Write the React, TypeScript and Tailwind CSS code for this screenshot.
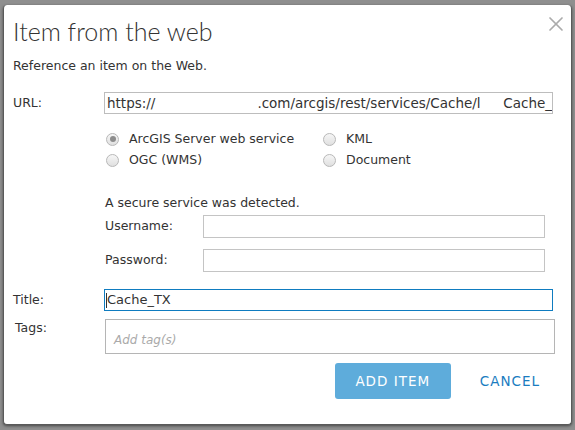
import { X } from 'lucide-react';

function Radio({ checked, label }: { checked?: boolean; label: string }) {
  return (
    <div className="flex items-center gap-[10px]">
      <span className="w-[13px] h-[13px] rounded-full border border-[#b8b8b8] bg-gradient-to-b from-[#f6f6f6] to-[#e0e0e0] flex items-center justify-center">
        {checked && <span className="w-[6px] h-[6px] rounded-full bg-[#8c8c8c]" />}
      </span>
      <span>{label}</span>
    </div>
  );
}

export default function App() {
  return (
    <div className="w-[575px] h-[430px] bg-[#8f8f8f] pt-[5px] pl-[3px] pr-[3px] pb-[5px]" style={{ fontFamily: '"DejaVu Sans", Verdana, sans-serif' }}>
      <div className="h-full bg-white rounded-[4px] border-l border-b border-r border-[#5a5a5a] shadow-[0_1px_3px_rgba(0,0,0,0.5)] text-[12.5px] text-[#333]">
        <div className="flex items-start justify-between pl-[9px] pr-[3px] pt-[11px]">
          <h1 className="text-[25px] font-light text-[#333] leading-[30px]" style={{ fontFamily: 'Lato, "Open Sans", sans-serif' }}>Item from the web</h1>
          <X className="w-[24px] h-[24px] text-[#ababab] -mt-[4px]" strokeWidth={1.7} />
        </div>
        <p className="pl-[9px] mt-[12px] leading-[16px]">Reference an item on the Web.</p>

        <div className="flex items-center mt-[18px] pl-[9px] pr-[18px]">
          <span className="w-[91px]">URL:</span>
          <div className="flex-1 h-[22px] border border-[#bdbdbd] flex items-center pl-[2px] overflow-hidden whitespace-nowrap text-[13.5px]">
            <span>https://</span>
            <span className="w-[102px] shrink-0" />
            <span>.com/arcgis/rest/services/Cache/l</span>
            <span className="ml-auto">Cache_</span>
          </div>
        </div>

        <div className="grid grid-cols-[217px_auto] gap-y-[7px] leading-[14px] pl-[102px] mt-[18px]">
          <Radio checked label="ArcGIS Server web service" />
          <Radio label="KML" />
          <Radio label="OGC (WMS)" />
          <Radio label="Document" />
        </div>

        <div className="pl-[101px] pr-[26px] mt-[28px]">
          <p className="leading-[16px]">A secure service was detected.</p>
          <div className="flex items-center mt-[4px]">
            <span className="w-[98px]">Username:</span>
            <div className="flex-1 h-[23px] border border-[#c4c4c4]" />
          </div>
          <div className="flex items-center mt-[11px]">
            <span className="w-[98px]">Password:</span>
            <div className="flex-1 h-[23px] border border-[#c4c4c4]" />
          </div>
        </div>

        <div className="flex items-start mt-[17px] pl-[9px] pr-[18px]">
          <span className="w-[91px] pt-[2px]">Title:</span>
          <div className="flex-1 h-[22px] border border-[#0f7cc0] flex items-center px-[1px] text-[13px]">
            <span className="w-px h-[15px] bg-[#333]" />
            <span>Cache_TX</span>
          </div>
        </div>

        <div className="flex items-start mt-[8px] pl-[11px] pr-[16px]">
          <span className="w-[90px]">Tags:</span>
          <div className="flex-1 h-[35px] border border-[#b5b5b5] flex items-center pl-[8px] pt-[6px]">
            <span className="italic text-[#aaa] text-[12px]">Add tag(s)</span>
          </div>
        </div>

        <div className="flex items-center justify-end mt-[9px] pr-[31px]">
          <button className="w-[116px] h-[36px] rounded-[3px] bg-[#5eacdb] text-white text-[13.5px] tracking-[1px]">ADD ITEM</button>
          <button className="ml-[29px] text-[#1a7cc0] text-[13.5px] tracking-[1px]">CANCEL</button>
        </div>
      </div>
    </div>
  );
}
